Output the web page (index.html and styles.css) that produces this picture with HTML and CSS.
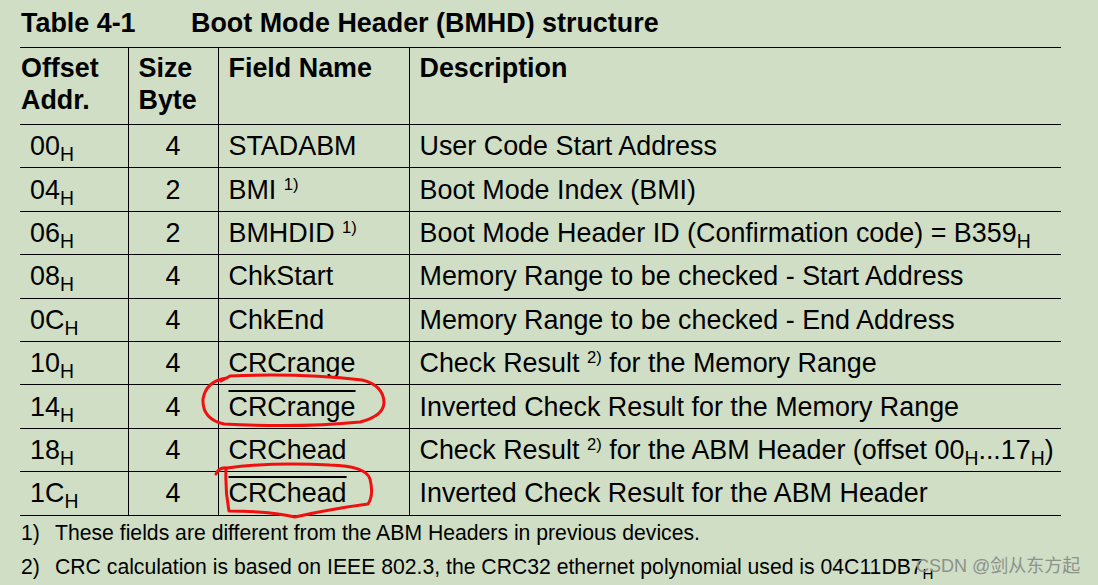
FILE: index.html
```html
<!DOCTYPE html>
<html lang="en">
<head>
<meta charset="utf-8">
<title>Table 4-1 Boot Mode Header (BMHD) structure</title>
<link rel="stylesheet" href="styles.css">
</head>
<body>
<div class="page">
  <div class="title"><span class="title-num">Table 4-1</span><span class="title-text">Boot Mode Header (BMHD) structure</span></div>
  <table class="bmhd">
    <colgroup>
      <col class="w-off"><col class="w-size"><col class="w-field"><col class="w-desc">
    </colgroup>
    <thead>
      <tr class="head-row">
        <th class="c-off">Offset<br>Addr.</th>
        <th class="c-size">Size<br>Byte</th>
        <th class="c-field">Field Name</th>
        <th class="c-desc">Description</th>
      </tr>
    </thead>
    <tbody>
      <tr><td class="c-off">00<sub>H</sub></td><td class="c-size">4</td><td class="c-field">STADABM</td><td class="c-desc">User Code Start Address</td></tr>
      <tr><td class="c-off">04<sub>H</sub></td><td class="c-size">2</td><td class="c-field">BMI <sup>1)</sup></td><td class="c-desc">Boot Mode Index (BMI)</td></tr>
      <tr><td class="c-off">06<sub>H</sub></td><td class="c-size">2</td><td class="c-field">BMHDID <sup>1)</sup></td><td class="c-desc">Boot Mode Header ID (Confirmation code) = B359<sub>H</sub></td></tr>
      <tr><td class="c-off">08<sub>H</sub></td><td class="c-size">4</td><td class="c-field">ChkStart</td><td class="c-desc">Memory Range to be checked - Start Address</td></tr>
      <tr><td class="c-off">0C<sub>H</sub></td><td class="c-size">4</td><td class="c-field">ChkEnd</td><td class="c-desc">Memory Range to be checked - End Address</td></tr>
      <tr><td class="c-off">10<sub>H</sub></td><td class="c-size">4</td><td class="c-field">CRCrange</td><td class="c-desc">Check Result <sup>2)</sup> for the Memory Range</td></tr>
      <tr><td class="c-off">14<sub>H</sub></td><td class="c-size">4</td><td class="c-field"><span class="inv">CRCrange</span></td><td class="c-desc">Inverted Check Result for the Memory Range</td></tr>
      <tr><td class="c-off">18<sub>H</sub></td><td class="c-size">4</td><td class="c-field">CRChead</td><td class="c-desc">Check Result <sup>2)</sup> for the ABM Header (offset 00<sub>H</sub>...17<sub>H</sub>)</td></tr>
      <tr><td class="c-off">1C<sub>H</sub></td><td class="c-size">4</td><td class="c-field"><span class="inv">CRChead</span></td><td class="c-desc">Inverted Check Result for the ABM Header</td></tr>
    </tbody>
  </table>
  <div class="notes">
    <div class="note"><span class="note-num">1)</span><span class="note-text">These fields are different from the ABM Headers in previous devices.</span></div>
    <div class="note"><span class="note-num">2)</span><span class="note-text">CRC calculation is based on IEEE 802.3, the CRC32 ethernet polynomial used is 04C11DB7<sub>H</sub></span></div>
  </div>
  <div class="watermark">CSDN @剑从东方起</div>
  <svg class="marks" viewBox="0 0 1098 585" width="1098" height="585">
    <path d="M227 378 Q206 381 203 399 Q202 419 224 424 Q300 428 360 422 Q384 416 384 402 Q383 385 362 380 Q300 373 230 376 L221 381" />
    <path d="M216 474 Q219 467 227 468 Q270 462 330 465 Q366 466 370 479 Q374 495 368 504 Q330 509 295 517 Q270 511 229 511 Q225 490 226 469" />
  </svg>
</div>
</body>
</html>
```

FILE: styles.css
```css
html, body {
  margin: 0;
  padding: 0;
  background: #cfdec5;
}

.page {
  position: relative;
  width: 1098px;
  height: 585px;
  overflow: hidden;
  background: #cfdec5;
  color: #000;
  font-family: "Liberation Sans", Arial, sans-serif;
  font-size: 26.9px;
}

.title {
  display: flex;
  margin: 8px 0 0 21px;
  height: 30px;
  line-height: 30px;
  font-weight: bold;
}

.title-num {
  width: 170px;
}

.bmhd {
  margin: 9px 0 0 20px;
  width: 1041px;
  border-collapse: collapse;
  table-layout: fixed;
}

.w-off { width: 108px; }
.w-size { width: 90px; }
.w-field { width: 191px; }
.w-desc { width: 652px; }

.bmhd th,
.bmhd td {
  border-top: 1px solid #000;
  border-bottom: 1px solid #000;
  padding: 0 0 0 10px;
  white-space: nowrap;
}

.bmhd th + th,
.bmhd td + td {
  border-left: 1px solid #000;
}

.bmhd th {
  text-align: left;
  vertical-align: top;
  font-weight: bold;
  line-height: 32px;
  padding-top: 4px;
}

.head-row {
  height: 77px;
}

.bmhd th.c-off {
  padding-left: 1px;
}

.bmhd tbody tr {
  height: 43.4px;
}

.bmhd td {
  line-height: 30px;
  vertical-align: middle;
}

.bmhd td.c-size {
  text-align: center;
  padding-left: 0;
}

sub {
  font-size: 0.72em;
  vertical-align: -0.3em;
  line-height: 0;
}

sup {
  font-size: 0.62em;
  vertical-align: 0.55em;
  line-height: 0;
}

.inv {
  text-decoration: overline;
  text-decoration-thickness: 2px;
}

.notes {
  font-size: 21.2px;
  line-height: 34px;
}

.note {
  display: flex;
  padding-left: 21px;
}

.note-num {
  width: 34px;
}

.watermark {
  position: absolute;
  left: 916px;
  top: 554px;
  font-family: "Liberation Sans", "Noto Sans CJK SC", sans-serif;
  font-size: 18px;
  line-height: 24px;
  color: #8d928b;
}

.marks {
  position: absolute;
  left: 0;
  top: 0;
  pointer-events: none;
  fill: none;
  stroke: #f01010;
  stroke-width: 3;
  stroke-linecap: round;
  stroke-linejoin: round;
}
```
